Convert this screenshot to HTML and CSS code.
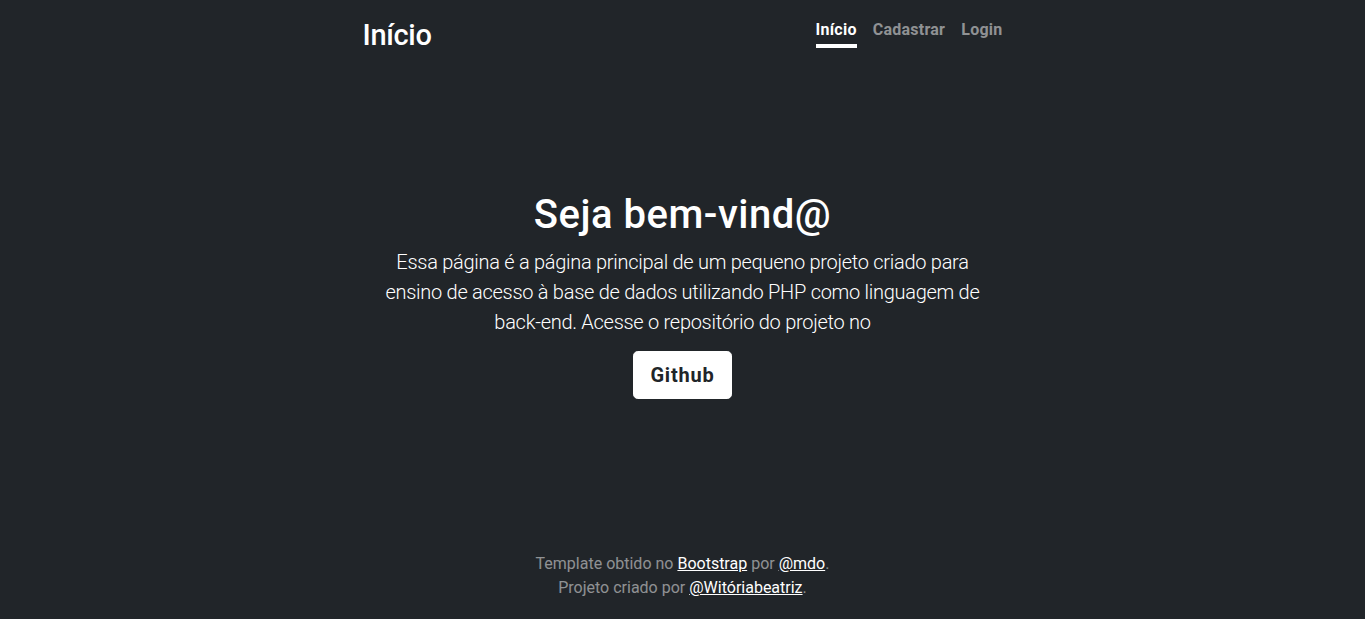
FILE: index.html
```html
<!DOCTYPE html>
<html lang="pt-br">
<head>
<meta charset="utf-8">
<title>Início</title>
<link rel="stylesheet" href="styles.css">
</head>
<body>
<div class="cover">
  <header class="masthead">
    <h3 class="brand">Início</h3>
    <nav class="nav">
      <a class="nav-link active" href="#">Início</a>
      <a class="nav-link" href="#">Cadastrar</a>
      <a class="nav-link" href="#">Login</a>
    </nav>
  </header>
  <main class="hero">
    <h1 class="title">Seja bem-vind@</h1>
    <p class="lead">Essa página é a página principal de um pequeno projeto criado para ensino de acesso à base de dados utilizando PHP como linguagem de back-end. Acesse o repositório do projeto no</p>
    <p class="lead action"><a class="btn" href="#">Github</a></p>
  </main>
  <footer class="footer">
    <p>Template obtido no <a href="#">Bootstrap</a> por <a href="#">@mdo</a>.<br>Projeto criado por <a href="#">@Witóriabeatriz</a>.</p>
  </footer>
</div>
</body>
</html>
```
FILE: styles.css
```css
html, body {
  height: 100%;
  margin: 0;
}
body {
  background: #212529;
  color: #fff;
  font-family: Roboto, "Noto Sans", sans-serif;
  font-size: 16px;
  line-height: 1.5;
  text-align: center;
  display: flex;
}
.cover {
  box-sizing: border-box;
  width: 100%;
  max-width: 672px;
  height: 100%;
  margin: 0 auto;
  padding: 16px;
  display: flex;
  flex-direction: column;
}
.masthead {
  display: flex;
  justify-content: space-between;
  align-items: flex-start;
  margin-bottom: auto;
}
.brand {
  margin: 1px 0 0;
  font-size: 29px;
  font-weight: 500;
  letter-spacing: -0.3px;
  line-height: 36px;
}
.nav {
  display: flex;
}
.nav-link {
  padding: 2px 0;
  margin-left: 16px;
  font-weight: 700;
  letter-spacing: 0.25px;
  line-height: 24px;
  color: rgba(255,255,255,.5);
  text-decoration: none;
  border-bottom: 4px solid transparent;
}
.nav-link.active {
  color: #fff;
  border-bottom-color: #fff;
}
.hero {
  padding: 0 16px;
}
.title {
  margin: 0 0 8px;
  font-size: 40px;
  font-weight: 500;
  letter-spacing: 0.5px;
  line-height: 48px;
}
.lead {
  margin: 0 0 14px;
  font-size: 20px;
  font-weight: 300;
  letter-spacing: -0.28px;
  line-height: 30px;
}
.lead.action {
  margin-bottom: 16px;
}
.btn {
  display: inline-block;
  padding: 8px 16px;
  font-size: 20px;
  font-weight: 700;
  letter-spacing: 0.8px;
  line-height: 30px;
  color: #212529;
  background: #fff;
  border: 1px solid #fff;
  border-radius: 4.8px;
  text-decoration: none;
}
.footer {
  margin-top: auto;
  color: rgba(255,255,255,.5);
}
.footer p {
  margin: 0 0 3px;
}
.footer a {
  color: #fff;
}
```
